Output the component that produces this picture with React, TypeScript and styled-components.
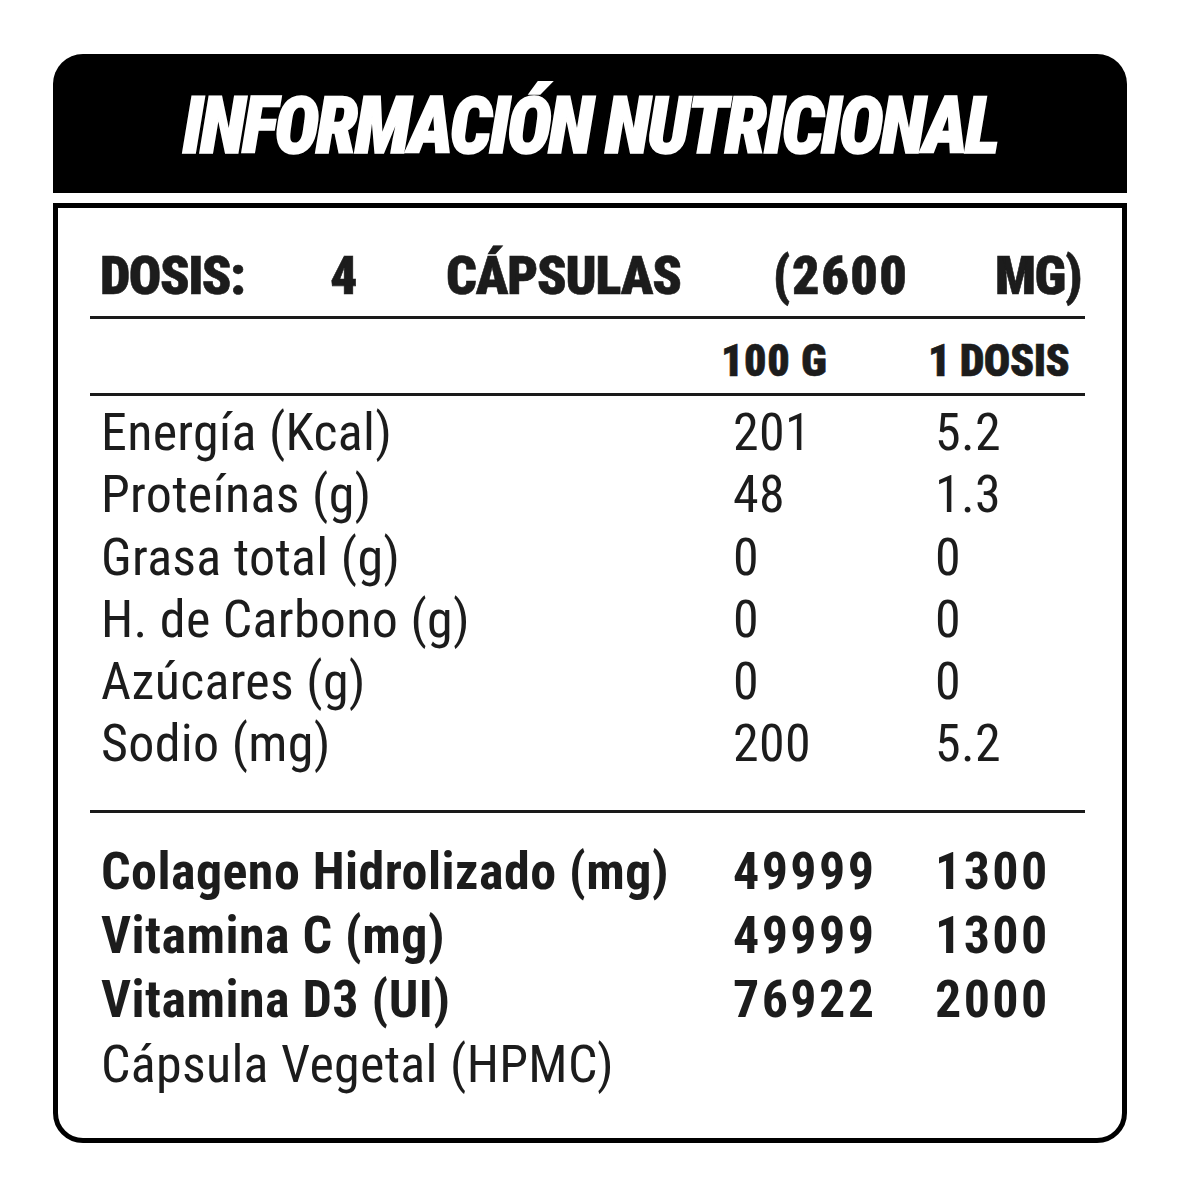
import React from "react";
import styled, { createGlobalStyle } from "styled-components";

const GlobalStyle = createGlobalStyle`
  html, body {
    margin: 0;
    padding: 0;
    background: #ffffff;
  }
  body {
    font-family: Roboto, "DejaVu Sans Condensed", sans-serif;
    font-stretch: 75%;
    color: #1c1c1c;
  }
`;

const FONT = `Roboto, "DejaVu Sans Condensed", sans-serif`;

const Page = styled.div`
  padding: 54px 0 57px 53px;
`;

const Card = styled.div`
  width: 1074px;
  display: flex;
  flex-direction: column;
  gap: 10px;
`;

const Header = styled.div`
  height: 139px;
  box-sizing: border-box;
  padding-top: 5px;
  background: #000;
  border-radius: 30px 30px 0 0;
  display: flex;
  align-items: center;
  justify-content: center;
`;

const Title = styled.h1`
  margin: 0;
  font-family: ${FONT};
  font-stretch: 75%;
  font-variation-settings: "wdth" 75;
  font-size: 80px;
  line-height: 1;
  font-weight: 900;
  font-style: italic;
  color: #fff;
  letter-spacing: -3px;
  -webkit-text-stroke: 1.6px #fff;
  white-space: nowrap;
  transform: scaleX(0.95);
`;

const Body = styled.div`
  border: 5px solid #000;
  border-radius: 0 0 30px 30px;
  padding: 0 37px 0 32px;
  display: flex;
  flex-direction: column;
`;

const DoseRow = styled.div`
  display: grid;
  grid-template-columns: 230px 116px 327px 222px 1fr;
  padding: 41px 0 13px 10px;
  border-bottom: 3px solid #1a1a1a;
`;

const Heavy = styled.span`
  font-family: ${FONT};
  font-stretch: 75%;
  font-variation-settings: "wdth" 75;
  font-weight: 900;
  line-height: 1;
  white-space: nowrap;
  color: #1c1c1c;
  -webkit-text-stroke: 0.6px #1c1c1c;
`;

const DoseWord = styled(Heavy)<{ $ls: number }>`
  font-size: 54px;
  letter-spacing: ${(p) => p.$ls}px;
`;

const Grid = styled.div<{ $pt: number; $pb: number; $line?: boolean }>`
  display: grid;
  grid-template-columns: 643px 202px 1fr;
  padding-top: ${(p) => p.$pt}px;
  padding-bottom: ${(p) => p.$pb}px;
  border-bottom: ${(p) => (p.$line ? "3px solid #1a1a1a" : "none")};
`;

const HeadCell = styled(Heavy)<{ $shift: number; $ls: number }>`
  font-size: 44px;
  margin-left: ${(p) => p.$shift}px;
  letter-spacing: ${(p) => p.$ls}px;
`;

const Cell = styled.span<{ $bold?: boolean; $label?: boolean; $h: number }>`
  font-family: ${FONT};
  font-stretch: 75%;
  font-variation-settings: "wdth" 75;
  font-weight: ${(p) => (p.$bold ? 700 : 400)};
  font-size: 52px;
  line-height: ${(p) => p.$h}px;
  padding-left: ${(p) => (p.$label ? 11 : 0)}px;
  letter-spacing: ${(p) => (p.$bold ? (p.$label ? 0.45 : 2.4) : 0.3)}px;
  white-space: nowrap;
`;

type Row = { label: string; a?: string; b?: string; bold?: boolean };

const basic: Row[] = [
  { label: "Energía (Kcal)", a: "201", b: "5.2" },
  { label: "Proteínas (g)", a: "48", b: "1.3" },
  { label: "Grasa total (g)", a: "0", b: "0" },
  { label: "H. de Carbono (g)", a: "0", b: "0" },
  { label: "Azúcares (g)", a: "0", b: "0" },
  { label: "Sodio (mg)", a: "200", b: "5.2" },
];

const extra: Row[] = [
  { label: "Colageno Hidrolizado (mg)", a: "49999", b: "1300", bold: true },
  { label: "Vitamina C (mg)", a: "49999", b: "1300", bold: true },
  { label: "Vitamina D3 (UI)", a: "76922", b: "2000", bold: true },
  { label: "Cápsula Vegetal (HPMC)" },
];

const renderRows = (rows: Row[], h: number) =>
  rows.map((r) => (
    <React.Fragment key={r.label}>
      <Cell $label $bold={r.bold} $h={h}>
        {r.label}
      </Cell>
      <Cell $bold={r.bold} $h={h}>
        {r.a ?? ""}
      </Cell>
      <Cell $bold={r.bold} $h={h}>
        {r.b ?? ""}
      </Cell>
    </React.Fragment>
  ));

export default function App() {
  return (
    <>
      <GlobalStyle />
      <Page>
        <Card>
          <Header>
            <Title>INFORMACIÓN NUTRICIONAL</Title>
          </Header>
          <Body>
            <DoseRow>
              <DoseWord $ls={-1.5}>DOSIS:</DoseWord>
              <DoseWord $ls={0}>4</DoseWord>
              <DoseWord $ls={-1.2}>CÁPSULAS</DoseWord>
              <DoseWord $ls={1.5}>(2600</DoseWord>
              <DoseWord $ls={-1.4}>MG)</DoseWord>
            </DoseRow>
            <Grid $pt={20} $pb={10} $line>
              <span />
              <HeadCell $shift={-12} $ls={0.6}>100 G</HeadCell>
              <HeadCell $shift={-7} $ls={-0.5}>1 DOSIS</HeadCell>
            </Grid>
            <Grid $pt={6} $pb={34} $line>
              {renderRows(basic, 62.3)}
            </Grid>
            <Grid $pt={27} $pb={41}>
              {renderRows(extra, 64.3)}
            </Grid>
          </Body>
        </Card>
      </Page>
    </>
  );
}
